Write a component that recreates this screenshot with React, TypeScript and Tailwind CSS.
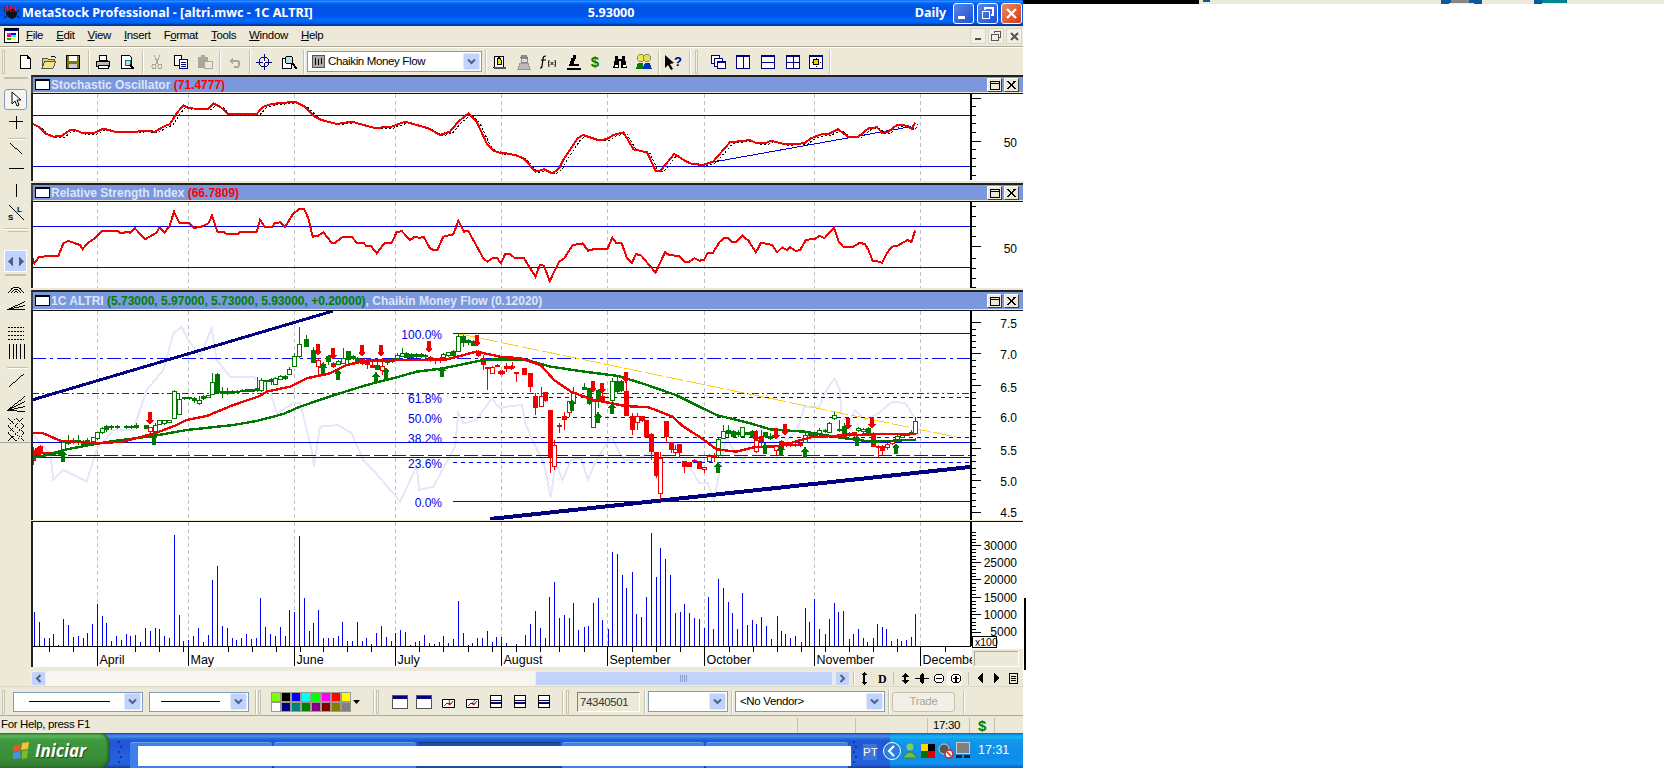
import React from "react";

type P = { children?: React.ReactNode };
const sx = (n: number) => n / 3;
const rx = (n: number) => 500 + n / 2.958;
const pts = (l: number[], r: number[], y0: number, dx = 0, dy = 0) => {
  const out: string[] = [];
  for (let i = 0; i < l.length; i += 2) out.push(`${sx(l[i]) + dx},${y0 + l[i + 1] / 3 + dy}`);
  for (let i = 0; i < r.length; i += 2) out.push(`${rx(r[i]) + dx},${y0 + r[i + 1] / 3 + dy}`);
  return out.join(" ");
};

const GRID = [97.5, 188.5, 294.5, 395.5, 501.5, 607.5, 704.5, 814.5, 920.5];

const stochL = [96,130,115,140,135,160,160,170,185,168,210,150,225,150,250,160,280,160,310,146,345,155,410,155,430,152,465,155,490,140,510,132,530,100,550,76,565,85,625,87,640,70,660,80,685,102,770,102,790,80,815,72,885,65,915,80,945,110,965,120,1010,132,1055,125,1120,143,1170,142,1215,125,1285,145,1320,165,1350,155,1375,125,1405,100,1430,125,1460,190,1480,212,1510,222];
const stochR = [0,217,45,225,70,235,105,275,130,268,155,280,175,265,190,235,230,175,245,165,290,180,315,178,335,165,365,157,395,208,435,217,460,272,475,272,515,222,560,250,600,255,630,245,680,187,740,180,760,190,785,190,800,182,845,193,900,190,920,175,950,163,970,163,1000,148,1030,170,1060,170,1090,145,1115,142,1130,158,1145,157,1175,135,1205,137,1218,147,1228,128];
const rsiL = [96,530,103,550,118,530,175,528,190,490,205,483,240,495,248,507,265,488,280,478,305,453,355,453,362,460,385,455,390,458,405,445,435,478,470,458,478,442,493,458,508,440,522,395,538,428,565,428,580,443,600,442,625,430,636,407,652,455,670,455,680,462,715,462,722,455,770,455,780,420,795,441,815,441,825,430,840,427,855,441,880,400,900,386,912,386,925,415,938,470,955,467,970,457,995,488,1005,488,1030,470,1055,470,1070,488,1090,488,1098,497,1112,497,1130,520,1155,488,1175,488,1190,457,1205,453,1230,480,1245,470,1255,473,1272,472,1290,505,1300,510,1312,510,1330,470,1360,463,1375,422,1392,455,1405,453,1450,535,1462,545,1480,533,1490,533,1503,550];
const rsiR = [15,523,30,523,45,535,70,533,105,590,118,555,130,557,147,603,175,545,190,535,215,495,245,490,260,512,280,507,318,507,332,473,345,490,360,490,375,533,390,550,402,522,418,527,460,578,488,517,500,525,530,528,545,545,560,545,575,535,590,542,603,540,615,518,630,518,650,485,665,473,675,473,685,485,700,485,717,467,735,482,757,517,772,488,805,495,820,517,835,502,848,510,858,502,875,513,888,510,905,480,932,476,945,468,960,474,988,443,1002,485,1015,500,1045,500,1065,488,1080,493,1090,510,1102,542,1115,543,1130,549,1145,518,1160,500,1175,498,1205,480,1217,486,1228,452];
const ghostL = [96,430,150,490,160,570,190,540,260,575,290,480,340,420,400,420,440,300,490,240,520,130,545,110,565,150,600,200,635,115,650,210,690,260,760,260,810,300,830,370,880,340,900,340,935,480,942,530,960,410,1015,405,1055,430,1090,510,1120,540,1200,635,1250,530,1258,600,1300,590,1365,470,1375,370,1390,400,1430,390,1475,325];
const ghostR = [0,355,20,350,65,345,75,400,100,460,130,520,150,620,165,520,185,570,210,510,240,505,260,570,285,510,330,440,345,470,365,510,400,510,440,490,480,495,520,510,560,530,590,580,615,580,632,630,645,570,670,440,700,500,720,510,750,440,780,410,810,420,850,450,880,420,900,350,945,350,965,300,990,265,1005,300,1010,370,1030,400,1050,360,1080,390,1120,370,1160,335,1200,340,1230,390];
const greenL = [96,505,150,492,200,478,270,465,340,453,460,438,560,420,700,405,770,393,850,372,900,350,1000,316,1100,285,1190,262,1250,245,1330,235,1450,210];
const greenR = [0,208,80,210,150,230,250,245,350,258,420,280,520,315,640,375,740,400,800,418,900,425,1020,445,1100,455,1230,449];
const redL = [96,428,130,430,180,452,290,460,370,455,470,428,530,405,560,390,620,378,700,345,780,318,800,305,870,290,920,265,990,250,1040,225,1100,212,1240,210,1340,208,1430,185,1500,200];
const redR = [0,200,60,205,120,225,160,270,210,305,270,328,370,348,440,352,510,380,540,408,600,447,640,478,700,485,750,472,830,468,890,450,920,442,1000,437,1100,433,1230,432];

const candlesL = "100,470,525,480,510,R;110,470,500,475,492,R;120,465,495,470,490,R;135,485,500,487,495,R;147,485,498,488,495,R;160,485,498,488,494,g;175,480,495,485,491,g;190,450,515,458,478,g;205,435,465,450,460,G;220,445,462,452,458,G;235,435,465,450,458,G;250,450,470,455,465,G;262,445,470,452,465,G;278,440,462,442,455,g;292,425,450,428,445,g;305,412,432,415,428,g;318,405,425,410,418,G;333,405,420,408,412,g;350,405,418,410,412,G;378,405,418,410,412,G;393,405,418,410,413,G;407,400,418,405,413,G;437,405,418,407,416,G;450,410,435,413,425,r;465,400,440,405,425,g;478,390,405,392,402,g;493,390,405,392,400,g;507,390,400,392,396,g;522,300,388,305,385,g;537,310,375,328,372,g;553,320,330,322,326,G;568,320,330,323,326,G;582,322,340,325,330,G;596,318,345,330,340,g;610,315,330,318,324,G;625,315,325,317,322,g;637,250,315,278,312,g;652,250,310,252,308,G;667,290,325,305,310,G;682,295,315,303,310,G;697,300,312,303,309,G;712,300,310,303,308,G;727,298,306,300,304,G;742,296,306,298,303,G;757,296,306,298,303,G;772,262,306,295,302,G;782,265,305,272,302,g;797,270,305,272,275,G;812,265,285,268,274,G;825,262,285,265,282,g;840,255,270,258,268,g;855,255,270,258,265,G;868,230,255,238,252,g;883,190,232,200,230,g;898,112,205,162,200,g;918,135,172,148,170,G;940,170,220,182,218,G;955,205,260,212,230,r;970,215,252,222,232,G;985,195,225,198,215,G;1000,215,235,220,230,R;1015,210,225,215,222,g;1028,175,222,205,220,g;1043,185,220,185,208,G;1058,195,210,198,205,G;1072,200,222,205,218,G;1087,205,225,208,220,R;1100,205,238,210,222,R;1115,215,235,225,232,R;1130,210,240,225,238,G;1145,205,255,230,240,r;1160,205,225,210,217,g;1175,205,220,208,215,G;1190,190,210,195,205,g;1205,175,200,190,198,g;1218,185,205,190,202,G;1232,190,205,192,202,G;1247,190,203,193,200,G;1262,190,203,193,198,G;1275,192,205,195,200,G;1290,198,215,202,212,R;1305,205,222,207,212,R;1320,202,220,205,212,R;1330,190,205,193,202,g;1345,185,200,188,197,g;1360,180,200,185,195,G;1375,128,187,140,185,g;1390,135,170,140,158,G;1405,148,165,152,158,G;1420,150,165,155,165,G;1435,180,200,185,195,R;1448,195,240,205,222,R;1462,230,300,232,235,R;1476,228,252,232,250,r;1490,222,232,225,228,R;1505,240,255,245,250,R;1518,225,245,230,236,r;1533,225,240,230,235,r";
const candlesR = "0,240,255,245,250,R;18,220,245,228,233,r;35,215,235,228,232,r;48,245,275,247,249,R;70,233,255,235,252,R;90,250,305,250,290,R;105,310,375,320,352,R;120,290,350,320,350,r;133,305,335,308,330,R;147,360,550,360,500,R;160,450,540,465,530,r;175,400,430,405,410,R;190,365,420,380,388,R;203,335,380,335,368,r;217,290,345,310,340,g;247,280,300,292,297,G;262,295,345,295,340,G;275,335,415,335,412,r;289,300,355,300,335,G;303,300,330,320,330,R;332,265,335,275,330,g;345,255,310,275,305,G;358,270,305,275,300,G;372,250,375,305,375,R;390,370,435,378,418,R;405,370,420,378,398,r;420,378,395,378,392,R;433,392,440,392,438,R;447,430,510,432,485,R;460,487,565,487,555,R;473,487,630,505,610,r;490,393,460,393,440,R;505,458,490,458,478,R;518,465,495,478,488,r;530,462,505,462,488,R;545,512,550,515,530,R;560,515,530,518,528,R;575,508,515,510,512,R;590,515,535,515,535,R;603,530,550,532,538,r;617,492,517,498,515,r;632,490,515,497,500,R;646,445,500,447,497,g;660,405,445,425,445,g;675,405,440,420,430,G;688,420,445,423,440,G;703,420,440,428,432,G;717,410,440,412,440,g;731,425,435,428,432,G;745,420,445,423,440,G;757,420,490,450,485,r;772,420,470,440,455,R;785,425,445,428,438,G;800,430,450,440,445,G;815,465,495,470,480,r;830,450,490,455,475,R;845,455,470,458,465,R;858,460,470,462,465,R;872,458,470,462,465,R;888,455,470,460,465,R;902,430,460,437,457,g;917,425,440,428,435,G;931,425,440,428,435,G;945,415,440,420,430,g;960,418,430,420,425,G;973,395,430,400,428,g;988,365,390,375,385,g;1002,390,425,418,422,G;1017,400,430,410,430,G;1032,425,440,430,435,R;1047,425,440,428,435,R;1060,410,425,415,422,g;1075,415,430,418,425,g;1088,410,430,415,430,G;1102,425,470,430,470,R;1117,465,500,468,472,R;1131,465,495,468,480,R;1145,460,480,462,472,r;1160,450,465,452,460,r;1175,435,450,438,450,g;1189,430,445,435,442,g;1203,428,438,430,436,G;1217,420,435,428,433,G;1229,382,432,395,430,g";

const volL = [103,280,118,310,133,357,148,357,160,345,175,378,190,300,205,318,220,354,235,351,248,357,262,342,277,315,292,255,307,291,319,312,334,366,349,351,364,363,379,345,391,351,406,348,421,369,436,327,451,336,466,327,478,330,493,351,508,357,523,48,538,288,550,366,565,363,580,351,595,327,610,369,625,348,637,183,652,141,667,321,682,327,697,357,709,363,724,357,739,345,754,360,769,357,781,237,796,324,811,345,826,351,841,324,856,351,868,273,883,279,898,51,913,237,928,336,940,312,955,273,970,357,985,357,1000,357,1015,351,1027,309,1042,366,1057,366,1072,309,1087,366,1099,357,1114,375,1129,342,1144,321,1159,354,1174,366,1186,342,1201,333,1216,339,1231,378,1246,369,1258,366,1273,348,1288,372,1303,375,1318,369,1330,351,1345,372,1360,360,1375,246,1390,342,1405,378,1417,372,1432,357,1447,357,1462,336,1477,369,1489,354];
const volR = [4,354,19,372,48,376,75,348,90,315,105,276,119,327,134,357,146,234,161,189,176,297,190,288,205,297,217,252,232,333,247,324,261,321,276,252,291,237,303,303,318,330,332,99,347,105,362,168,374,207,389,159,403,285,418,294,433,234,448,42,460,174,474,87,489,120,504,168,519,282,531,279,545,255,560,282,575,297,590,300,604,327,616,234,631,330,646,180,661,207,675,249,687,282,702,330,717,222,732,318,746,303,758,315,773,294,788,321,803,360,818,291,832,336,844,345,858,357,874,351,889,369,903,267,915,309,930,240,945,330,960,345,974,300,989,252,1001,279,1016,276,1031,360,1045,345,1060,330,1073,357,1087,369,1102,357,1116,315,1131,324,1143,330,1158,366,1173,360,1187,366,1202,363,1217,354,1229,285];

const Grid = ({ y1, y2 }: { y1: number; y2: number }) => (
  <g>
    {GRID.map((x) => (
      <line key={x} x1={x} x2={x} y1={y1} y2={y2} stroke="#c0c0c0" strokeDasharray="4 3" />
    ))}
  </g>
);

const Ticks = ({ major, minor, y1, y2 }: { major: number[]; minor: number[]; y1: number; y2: number }) => (
  <g stroke="#000">
    <line x1={971} x2={971} y1={y1} y2={y2} strokeWidth={2} />
    {major.map((y) => <line key={y} x1={971} x2={981} y1={y} y2={y} />)}
    {minor.map((y) => <line key={y} x1={971} x2={976} y1={y} y2={y} />)}
  </g>
);

const AxisText = ({ y, t }: { y: number; t: string }) => (
  <text x={1017} y={y + 5} textAnchor="end" fontSize={12} fill="#000" fontFamily="Liberation Sans, sans-serif" style={{ shapeRendering: "auto" }}>{t}</text>
);

const between = (major: number[], n: number) => {
  const o: number[] = [];
  for (let i = 0; i + 1 < major.length; i++) {
    for (let j = 1; j < n; j++) o.push(Math.round(major[i] + ((major[i + 1] - major[i]) * j) / n) + 0.5);
  }
  return o;
};

const StochChart = () => (
  <svg viewBox="33 94 990 87" width={990} height={87} className="block" shapeRendering="crispEdges">
    <Grid y1={94} y2={181} />
    <line x1={32} x2={971} y1={115.5} y2={115.5} stroke="#0000e6" />
    <line x1={32} x2={971} y1={166.5} y2={166.5} stroke="#0000e6" />
    <polyline points={pts(stochL, stochR, 80, 3, 1)} fill="none" stroke="#000" strokeDasharray="2 2" />
    <line x1={rx(610)} y1={80 + 250 / 3} x2={rx(1215)} y2={80 + 140 / 3} stroke="#0000e6" />
    <polyline points={pts(stochL, stochR, 80)} fill="none" stroke="#f00000" strokeWidth={2} />
    <Ticks y1={94} y2={180} major={[98.5, 141.5]} minor={[106.5, 115.5, 123.5, 132.5, 149.5, 158.5, 166.5, 175.5]} />
    <AxisText y={142} t="50" />
  </svg>
);

const RsiChart = () => (
  <svg viewBox="33 202 990 86" width={990} height={86} className="block" shapeRendering="crispEdges">
    <Grid y1={202} y2={288} />
    <line x1={32} x2={971} y1={226.5} y2={226.5} stroke="#0000e6" />
    <line x1={32} x2={971} y1={267.5} y2={267.5} stroke="#0000e6" />
    <polyline points={pts(rsiL, rsiR, 80)} fill="none" stroke="#f00000" strokeWidth={2} />
    <Ticks y1={202} y2={288} major={[246.5]} minor={[206.5, 216.5, 226.5, 236.5, 258.5, 268.5, 278.5, 287.5]} />
    <AxisText y={248} t="50" />
  </svg>
);

const parse = (s: string, fx: (n: number) => number) =>
  s.split(";").map((row) => {
    const a = row.split(",");
    return { x: Math.round(fx(+a[0])), hi: 290 + +a[1] / 3, lo: 290 + +a[2] / 3, top: 290 + +a[3] / 3, bot: 290 + +a[4] / 3, k: a[5] };
  });
const candles = [...parse(candlesL, sx), ...parse(candlesR, rx)];

const Candle = ({ c }: { c: (typeof candles)[number] }) => {
  const col = c.k === "R" || c.k === "r" ? "#f00000" : "#007800";
  const filled = c.k === "R" || c.k === "G";
  return (
    <g>
      <line x1={c.x + 0.5} x2={c.x + 0.5} y1={c.hi} y2={c.lo} stroke={col} />
      <rect x={c.x - 1.5} y={c.top} width={4} height={Math.max(c.bot - c.top, 1)} fill={filled ? col : "#fff"} stroke={col} strokeWidth={1} />
    </g>
  );
};

const ArrowDown = ({ x, a, b }: { x: number; a: number; b: number }) => (
  <polygon fill="#f00000" points={`${x - 2},${a} ${x + 2},${a} ${x + 2},${b - 5} ${x + 4},${b - 5} ${x},${b} ${x - 4},${b - 5} ${x - 2},${b - 5}`} />
);
const ArrowUp = ({ x, a, b }: { x: number; a: number; b: number }) => (
  <polygon fill="#007800" points={`${x - 2},${b} ${x + 2},${b} ${x + 2},${a + 5} ${x + 4},${a + 5} ${x},${a} ${x - 4},${a + 5} ${x - 2},${a + 5}`} />
);

const downL = [[450,365,405],[953,162,197],[998,175,210],[1086,165,200],[1143,165,200],[1287,153,188],[1431,135,170]];
const downR = [[275,272,308],[302,278,312],[372,245,280],[757,422,455],[815,415,450],[842,402,437],[1030,385,420],[1100,382,417]];
const upL = [[188,480,515],[463,430,465],[968,218,252],[1013,238,270],[1127,245,280],[1158,232,267],[1327,228,262]];
const upR = [[213,328,362],[290,365,400],[330,338,372],[645,515,550],[785,458,492],[830,465,497],[902,470,503],[1057,435,468],[1172,460,493]];

const Fib = ({ y, t, line = "4 4" }: { y: number; t: string; line?: string }) => (
  <g>
    <line x1={453} x2={971} y1={y} y2={y} stroke="#0000e6" strokeDasharray={line} />
    <text x={442} y={y + 5} textAnchor="end" fontSize={12} fill="#0000e6" fontFamily="Liberation Sans, sans-serif">{t}</text>
  </g>
);

const mainMajor = [322.5, 353.5, 385.5, 417.5, 448.5, 480.5, 512.5];

const MainChart = () => (
  <svg viewBox="33 311 990 209" width={990} height={209} className="block" shapeRendering="crispEdges">
    <Grid y1={311} y2={520} />
    <polyline points={pts(ghostL, ghostR, 290)} fill="none" stroke="#e4e8f8" strokeWidth={2} />
    <line x1={32} x2={971} y1={358.5} y2={358.5} stroke="#0a0aff" strokeDasharray="14 4 3 4" />
    <line x1={32} x2={971} y1={393.5} y2={393.5} stroke="#0a4a2a" strokeDasharray="7 3 2 3" />
    <line x1={32} x2={971} y1={442.5} y2={442.5} stroke="#0000e6" />
    <line x1={32} x2={971} y1={455.5} y2={455.5} stroke="#0a3a2a" strokeDasharray="14 4" />
    <line x1={32} x2={971} y1={457.5} y2={457.5} stroke="#0000e6" />
    <line x1={32} y1={400} x2={333} y2={311} stroke="#000080" strokeWidth={3} />
    <line x1={490} y1={519} x2={970} y2={467} stroke="#000080" strokeWidth={4} />
    <line x1={460} y1={334} x2={956} y2={437} stroke="#ffd21a" strokeDasharray="18 3" />
    <Fib y={333.5} t="100.0%" line="0" />
    <Fib y={397.5} t="61.8%" />
    <Fib y={417.5} t="50.0%" />
    <Fib y={437.5} t="38.2%" />
    <Fib y={462.5} t="23.6%" />
    <Fib y={501.5} t="0.0%" line="0" />
    {candles.map((c, i) => <Candle key={i} c={c} />)}
    <polyline points={pts(greenL, greenR, 290)} fill="none" stroke="#007800" strokeWidth={2.4} />
    <polyline points={pts(redL, redR, 290)} fill="none" stroke="#f00000" strokeWidth={2.4} />
    {downL.map((d) => <ArrowDown key={d[0]} x={Math.round(sx(d[0]))} a={290 + d[1] / 3} b={290 + d[2] / 3} />)}
    {downR.map((d) => <ArrowDown key={d[0]} x={Math.round(rx(d[0]))} a={290 + d[1] / 3} b={290 + d[2] / 3} />)}
    {upL.map((d) => <ArrowUp key={d[0]} x={Math.round(sx(d[0]))} a={290 + d[1] / 3} b={290 + d[2] / 3} />)}
    {upR.map((d) => <ArrowUp key={d[0]} x={Math.round(rx(d[0]))} a={290 + d[1] / 3} b={290 + d[2] / 3} />)}
    <Ticks y1={311} y2={520} major={mainMajor} minor={between(mainMajor, 5)} />
    {["7.5", "7.0", "6.5", "6.0", "5.5", "5.0", "4.5"].map((t, i) => <AxisText key={t} y={[323, 354, 387, 417, 450, 481, 512][i]} t={t} />)}
  </svg>
);

const minorX = [148,220,406,478,550,683,755,827,899,970,1042,1114,1258,1330,1405,1477,1549].map(sx).concat([48,119,176,247,389,460,531,676,747,818,889,960,1031,1102,1173,1316].map(rx));
const months: [string, number][] = [["April", 97.5],["May", 188.5],["June", 294.5],["July", 395.5],["August", 501.5],["September", 607.5],["October", 704.5],["November", 814.5],["December", 920.5]];
const volMajor = [546.5, 563.5, 580.5, 598.5, 615.5, 633.5];

const VolumeChart = () => (
  <svg viewBox="33 523 990 145" width={990} height={145} className="block" shapeRendering="crispEdges">
    <rect x={33} y={523} width={990} height={145} fill="#fff" />
    <Grid y1={523} y2={647} />
    {volL.map((_, i) => i % 2 === 0 ? <rect key={"a" + i} x={Math.round(sx(volL[i]))} y={520 + volL[i + 1] / 3} width={1} height={647 - 520 - volL[i + 1] / 3} fill="#0000f0" /> : null)}
    {volR.map((_, i) => i % 2 === 0 ? <rect key={"b" + i} x={Math.round(rx(volR[i]))} y={520 + volR[i + 1] / 3} width={1} height={647 - 520 - volR[i + 1] / 3} fill="#0000f0" /> : null)}
    <line x1={33} x2={971} y1={647.5} y2={647.5} stroke="#000" />
    {minorX.map((x, i) => <line key={i} x1={Math.round(x) + 0.5} x2={Math.round(x) + 0.5} y1={647} y2={653} stroke="#000" />)}
    {months.map(([t, x]) => (
      <g key={t}>
        <line x1={x} x2={x} y1={647} y2={667} stroke="#000" />
        <text x={x + 2} y={665} fontSize={12.5} fill="#000" fontFamily="Liberation Sans, sans-serif">{t}</text>
      </g>
    ))}
    <rect x={972} y={523} width={51} height={145} fill="#fff" />
    <Ticks y1={523} y2={647} major={volMajor} minor={between([529.5, ...volMajor], 5)} />
    {["30000", "25000", "20000", "15000", "10000"].map((t, i) => <AxisText key={t} y={[546, 563, 580, 598, 615][i]} t={t} />)}
    <AxisText y={632} t="5000" />
    <rect x={972.5} y={637.5} width={24} height={11} fill="#fff" stroke="#000" />
    <text x={975} y={647} fontSize={10.5} fill="#000" fontFamily="Liberation Sans, sans-serif">x100</text>
    <rect x={972} y={650} width={51} height={18} fill="#ece9d8" />
    <rect x={974.5} y={652.5} width={44} height={15} fill="#ece9d8" stroke="#aca899" />
    <line x1={974} x2={1019} y1={667.5} y2={667.5} stroke="#fff" />
    <line x1={1018.5} x2={1018.5} y1={652} y2={668} stroke="#fff" />
  </svg>
);

const WinBtn = ({ kind }: { kind: "max" | "x" }) => (
  <span className="w-[15px] h-[14px] bg-[#ece9d8] border border-t-white border-l-white border-r-[#404040] border-b-[#404040] flex items-center justify-center">
    <svg width="11" height="10" viewBox="0 0 11 10" shapeRendering="crispEdges">
      {kind === "max" ? (
        <path d="M1 1h9v8H1zM1 1h9v2H1z" fill="none" stroke="#000" />
      ) : (
        <path d="M2 1l7 8M9 1L2 9" stroke="#000" strokeWidth="1.6" />
      )}
    </svg>
  </span>
);

const PanelHead = ({ children, tall }: P & { tall?: boolean }) => (
  <div className={(tall ? "h-[20px]" : "h-[18px]") + " border-t-2 border-t-[#222] border-l-2 border-l-[#444] bg-[#ece9d8] flex shrink-0"}>
    <div className="flex-1 mb-[1px] bg-[#7b98de] flex items-center pl-[2px] pr-[4px] font-['Liberation_Sans',sans-serif] text-[12px] font-bold leading-none text-[#dde5f9] whitespace-nowrap">
      <span className="w-[15px] h-[11px] mr-[1px] bg-white border border-black border-t-2 shrink-0" />
      <span>{children}</span>
      <span className="ml-auto flex gap-[2px]">
        <WinBtn kind="max" />
        <WinBtn kind="x" />
      </span>
    </div>
  </div>
);

const Body = ({ children }: P) => (
  <div className="border-l-2 border-l-[#222] border-t border-t-[#111] bg-white shrink-0">{children}</div>
);

/* ---- small icons ---- */
const I = ({ children, w = 16, h = 16 }: P & { w?: number; h?: number }) => (
  <svg width={w} height={h} viewBox={`0 0 ${w} ${h}`} shapeRendering="crispEdges" className="block">{children}</svg>
);
const NewIc = () => <I><path d="M3 1.500h7l3 3v10H3z" fill="#fff" stroke="#000" /><path d="M10 1.500v3h3" fill="none" stroke="#000" /></I>;
const OpenIc = () => <I><path d="M1 4h5l1 1h6v2H4L1 14z" fill="#e8d060" stroke="#555" /><path d="M1 14l3-7h11l-3 7z" fill="#f2e48a" stroke="#555" /><path d="M10 3q3-2 5 1" fill="none" stroke="#000" /></I>;
const SaveIc = () => <I><path d="M1.500 1.500h13v13h-13z" fill="#7a7a10" stroke="#000" /><path d="M4 2h8v5H4z" fill="#fff" /><path d="M4 10h8v4H4z" fill="#ccc" /></I>;
const PrintIc = () => <I><path d="M4 1.500h7l1 5H4z" fill="#fff" stroke="#000" /><path d="M1.500 7.500h13v5h-13z" fill="#bbb" stroke="#000" /><path d="M3 11.500h10v3H3z" fill="#fff" stroke="#000" /></I>;
const PreviewIc = () => <I><path d="M2.500 1.500h8l2 2v11h-10z" fill="#fff" stroke="#000" /><circle cx="9" cy="9" r="3" fill="#b8e0e8" stroke="#008080" /><path d="M11 11l4 4" stroke="#000" strokeWidth="2" /></I>;
const CutIc = () => <I><path d="M5 1l4 9M11 1L7 10" stroke="#a8a89a" /><circle cx="5" cy="12.500" r="2" fill="none" stroke="#a8a89a" /><circle cx="11" cy="12.500" r="2" fill="none" stroke="#a8a89a" /></I>;
const CopyIc = () => <I><path d="M1.500 1.500h7v10h-7z" fill="#fff" stroke="#000" /><path d="M6.500 5.500h8v9h-8z" fill="#fff" stroke="#000080" /><path d="M8 8h5M8 10h5M8 12h5" stroke="#000080" /></I>;
const PasteIc = () => <I><path d="M1 3h10v11H1z" fill="#a8a89a" /><path d="M4 1h4v3H4z" fill="#a8a89a" /><path d="M7.500 7.500h8v7h-8z" fill="#ece9d8" stroke="#a8a89a" /></I>;
const UndoIc = () => <I><path d="M3 7h8q3 2 0 6H7" fill="none" stroke="#a8a89a" strokeWidth="2" /><path d="M2 7l4-3v6z" fill="#a8a89a" /></I>;
const TargetIc = () => <I><circle cx="8" cy="8" r="5" fill="none" stroke="#000080" /><path d="M8 0v16M0 8h16" stroke="#000080" /><path d="M7 7h2v2H7z" fill="#fff" /></I>;
const ZoomIc = () => <I><path d="M1.500 4.500h9v10h-9z" fill="#fff" stroke="#000" /><circle cx="8" cy="6" r="4" fill="#b8e0e8" stroke="#000" /><path d="M11 9l5 6" stroke="#000" strokeWidth="2" /></I>;
const AlarmIc = () => <I><path d="M4 2h8l1 11H3z" fill="#fff" stroke="#000" /><path d="M6 6l2-3 2 3v4H6z" fill="#e0e020" stroke="#000" /><path d="M3 13h12v2H3z" fill="#555" /></I>;
const ManIc = () => <I><path d="M4 3h8v1H4z" fill="#555" /><path d="M5 1h6v3H5z" fill="#888" /><path d="M5 4h6v4H5z" fill="#ddd" stroke="#888" /><path d="M2 15l2-6h8l2 6z" fill="#bbb" stroke="#999" /></I>;
const FxIc = () => <svg width="18" height="16" viewBox="0 0 18 16" className="block"><path d="M7 2q-3 0-3 3l-1 7q0 2-2 2M2 6h5" fill="none" stroke="#000" strokeWidth="1.2" /><path d="M10 6q-1 3 0 7M16 6q1 3 0 7M11.500 8l3 3M14.500 8l-3 3" fill="none" stroke="#000" /></svg>;
const MicroIc = () => <I><path d="M7 1h3v3H7zM5 4h5l-3 7H4zM3 10h10v2H3zM1 14h14v1.500H1z" fill="#000" /></I>;
const BinoIc = () => <I><path d="M3 2h3v3h4V2h3v3l2 9H9V7H7v7H1l2-9z" fill="#000" /><path d="M3 11h3v2H3zM11 11h3v2h-3z" fill="#fff" /></I>;
const PeopleIc = () => <I><circle cx="5" cy="4" r="3.500" fill="#f2e640" stroke="#888" /><circle cx="11" cy="4" r="3.500" fill="#e8e040" stroke="#888" /><path d="M0 15l2-6h5l1 6z" fill="#008000" /><path d="M7 15l2-6h5l2 6z" fill="#0030c0" /></I>;
const HelpIc = () => <svg width="20" height="18" viewBox="0 0 20 18" className="block"><path d="M1 2l9 8-4 1 3 5-2 1-3-5-3 3z" fill="#000" /><text x="10" y="13" fontSize="13" fontWeight="700" fill="#000080" fontFamily="Liberation Sans, sans-serif">?</text></svg>;
const Tile = ({ d }: { d: string }) => <I><path d="M1.500 1.500h13v13h-13z" fill="#fff" stroke="#000080" /><path d="M1 1h14v2H1z" fill="#000080" /><path d={d} stroke="#000080" fill="none" /></I>;
const CascadeIc = () => <I><path d="M1.500 1.500h8v8h-8z" fill="#fff" stroke="#000080" /><path d="M4.500 4.500h8v8h-8z" fill="#fff" stroke="#000080" /><path d="M7.500 7.500h8v7h-8z" fill="#fff" stroke="#000080" /><path d="M7 7h9v2H7z" fill="#000080" /></I>;
const GearIc = () => <I><path d="M1.500 1.500h13v13h-13z" fill="#fff" stroke="#000080" /><path d="M1 1h14v2H1z" fill="#000080" /><path d="M8 3.500v1M8 12v1M3.500 8h1M12 8h1M5 5l1 1M11 11l-1-1M11 5l-1 1M5 11l1-1" stroke="#000" /><circle cx="8" cy="8" r="3" fill="#f0d000" stroke="#000" /></I>;
const Dollar = () => <span className="font-['Liberation_Sans',sans-serif] font-bold text-[15px] text-[#008000] leading-none">$</span>;

const Sep = ({ className = "" }: { className?: string }) => (
  <span className={"w-[2px] h-[24px] border-l border-l-[#c4c1b0] border-r border-r-white shrink-0 " + className} />
);
const Grip = ({ className = "" }: { className?: string }) => (
  <span className={"w-[3px] h-[24px] bg-[#f4f2e8] border border-[#c4c1b0] shrink-0 " + className} />
);
const Cell = ({ children, className = "" }: P & { className?: string }) => (
  <span className={"w-6 h-[22px] flex items-center justify-center shrink-0 " + className}>{children}</span>
);
const Chev = () => (
  <span className="w-[17px] h-[17px] bg-[#c1d3fb] border border-[#dfe8fd] rounded-[2px] flex items-center justify-center shrink-0">
    <svg width="9" height="7" viewBox="0 0 9 7"><path d="M1 1.500l3.500 3.500L8 1.500" fill="none" stroke="#4d6185" strokeWidth="2" /></svg>
  </span>
);

const MI = ({ u, r }: { u: string; r: string }) => (
  <span><span className="underline">{u}</span>{r}</span>
);

const Lines = () => (
  <svg width="12" height="13" viewBox="0 0 12 13" shapeRendering="crispEdges"><path d="M.5 .5h11v12H.5zM.5 5.500h11" fill="#fff" stroke="#000" /><path d="M1 7h10v2H1z" fill="#000080" /></svg>
);

const Palette = () => {
  const a = ["#80ff00", "#000000", "#0000ff", "#00ffff", "#00ff00", "#ff00ff", "#ff0000", "#ffff00"];
  const b = ["#ffffff", "#000080", "#008080", "#008000", "#800080", "#800000", "#808000", "#808080"];
  return (
    <div className="grid grid-cols-8 gap-[2px] w-[78px]">
      {[...a, ...b].map((c, i) => (
        <span key={i} className="w-[8px] h-[8px] outline outline-1 outline-[#9c9a8a] box-border ml-[1px]" style={{ background: c }} />
      ))}
    </div>
  );
};

const titleGrad = "bg-[linear-gradient(180deg,#0058ee_0%,#3593ff_4%,#288eff_6%,#127dff_8%,#036ffc_10%,#0262ee_14%,#0057e5_20%,#0054e3_24%,#0055eb_56%,#005bf5_66%,#026afe_76%,#0062ef_86%,#0052d6_92%,#0040ab_94%,#003092_100%)]";
const ui = "text-[11.5px] tracking-[-0.35px]";

export default function App() {
  return (
    <div className="w-[1664px] h-[768px] bg-white overflow-hidden flex font-['Liberation_Sans',sans-serif] text-black">
      {/* Application window */}
      <div className="w-[1023px] h-[768px] flex flex-col shrink-0 bg-[#ece9d8]">
        {/* title bar */}
        <div className={"h-[26px] shrink-0 flex items-center text-white font-['Noto_Sans',sans-serif] font-bold text-[12.6px] " + titleGrad}>
          <svg width="18" height="18" viewBox="0 0 18 18" className="ml-[3px] mr-[1px] shrink-0">
            <path d="M3 8q6-6 11 0q1 5-5 7q-6-2-6-7" fill="#111" />
            <path d="M1 6l3 3M1 14l3-2M16 6l-3 3M17 14l-3-2" stroke="#111" />
            <text x="1" y="8" fontSize="8" fontWeight="700" fill="#e00000" fontFamily="Liberation Serif, serif">MS</text>
          </svg>
          <span className="whitespace-nowrap">MetaStock Professional - [altri.mwc - 1C ALTRI]</span>
          <span className="ml-[275px] w-[60px]">5.93000</span>
          <span className="ml-[268px] w-[39px]">Daily</span>
          <span className="flex gap-[3px] pr-[1px]">
            <span className="w-[21px] h-[21px] rounded-[3px] border border-white bg-[linear-gradient(135deg,#5a86ea,#1f50d0)] flex items-end justify-center pb-[4px]"><span className="block w-[7px] h-[3px] bg-white mr-[5px]" /></span>
            <span className="w-[21px] h-[21px] rounded-[3px] border border-white bg-[linear-gradient(135deg,#5a86ea,#1f50d0)] flex items-center justify-center">
              <svg width="13" height="13" viewBox="0 0 13 13" shapeRendering="crispEdges"><path d="M4 3V1h8v7h-2" fill="none" stroke="#fff" strokeWidth="1.500" /><path d="M1.500 4.500h7v7h-7z" fill="none" stroke="#fff" strokeWidth="1.500" /></svg>
            </span>
            <span className="w-[21px] h-[21px] rounded-[3px] border border-white bg-[linear-gradient(135deg,#eb8a68,#cf3a12)] flex items-center justify-center">
              <svg width="13" height="13" viewBox="0 0 13 13"><path d="M2 2l9 9M11 2l-9 9" stroke="#fff" strokeWidth="2.400" /></svg>
            </span>
          </span>
        </div>

        {/* menu bar */}
        <div className={"h-[21px] shrink-0 flex items-center leading-none border-b border-b-[#aca899] " + ui}>
          <svg width="16" height="16" viewBox="0 0 16 16" className="ml-[4px] shrink-0" shapeRendering="crispEdges">
            <path d="M.5 .5h14v14H.5z" fill="#fff" stroke="#000" />
            <path d="M1 1h13v2H1z" fill="#000080" />
            <path d="M3 5h4v2H3z" fill="#ff00ff" /><path d="M7 5h5v2H7z" fill="#0000ff" />
            <path d="M3 7h4v2H3z" fill="#ff0000" /><path d="M7 7h5v2H7z" fill="#00ffff" />
            <path d="M3 10h4v2H3z" fill="#00c000" /><path d="M7 10h5v2H7z" fill="#ffff00" />
          </svg>
          <span className="ml-[6px] flex gap-[13px]">
            <MI u="F" r="ile" /><MI u="E" r="dit" /><MI u="V" r="iew" /><MI u="I" r="nsert" />
            <span>F<span className="underline">o</span>rmat</span><MI u="T" r="ools" /><MI u="W" r="indow" /><MI u="H" r="elp" />
          </span>
          <span className="ml-auto flex gap-[2px] pr-[1px]">
            <span className="w-[16px] h-[16px] border border-[#d8d5c6] bg-[#f2f0e6] flex items-end justify-center pb-[3px]"><span className="block w-[6px] h-[2px] bg-[#555]" /></span>
            <span className="w-[16px] h-[16px] border border-[#d8d5c6] bg-[#f2f0e6] flex items-center justify-center">
              <svg width="10" height="10" viewBox="0 0 10 10" shapeRendering="crispEdges"><path d="M3 2V.5h6.500v6H8M.5 3.500h6.500v6H.5z" fill="none" stroke="#555" /></svg>
            </span>
            <span className="w-[16px] h-[16px] border border-[#d8d5c6] bg-[#f2f0e6] flex items-center justify-center">
              <svg width="9" height="9" viewBox="0 0 9 9"><path d="M1 1l7 7M8 1L1 8" stroke="#555" strokeWidth="2" /></svg>
            </span>
          </span>
        </div>

        {/* main toolbar */}
        <div className="h-[28px] shrink-0 flex items-center border-t border-t-white">
          <Grip className="ml-[2px]" />
          <Cell className="ml-[8px]"><NewIc /></Cell><Cell><OpenIc /></Cell><Cell><SaveIc /></Cell>
          <Sep className="ml-[3px]" />
          <Cell className="ml-[1px]"><PrintIc /></Cell><Cell><PreviewIc /></Cell>
          <Sep className="ml-[3px]" />
          <Cell className="ml-[1px]"><CutIc /></Cell><Cell><CopyIc /></Cell><Cell><PasteIc /></Cell>
          <Sep className="ml-[2px]" />
          <Cell className="ml-[2px]"><UndoIc /></Cell>
          <Sep className="ml-[2px]" />
          <Cell className="ml-[1px]"><TargetIc /></Cell><Cell className="ml-[1px]"><ZoomIc /></Cell>
          <Sep className="ml-[2px]" />
          <div className={"ml-[2px] w-[175px] h-[21px] bg-white border border-[#7f9db9] flex items-center pl-[4px] pr-[1px] shrink-0 " + ui}>
            <svg width="13" height="13" viewBox="0 0 13 13" shapeRendering="crispEdges" className="shrink-0 mr-[3px]"><path d="M.5 .5h12v12H.5z" fill="#aaa" stroke="#555" /><path d="M3 3v7M6 4v6M9 3v6" stroke="#000" /></svg>
            <span className="whitespace-nowrap">Chaikin Money Flow</span>
            <span className="ml-auto"><Chev /></span>
          </div>
          <Sep className="ml-[3px]" />
          <Cell><AlarmIc /></Cell><Cell className="ml-[1px]"><ManIc /></Cell><Cell><FxIc /></Cell>
          <Cell className="ml-[2px]"><MicroIc /></Cell><Cell className="-ml-[3px]"><Dollar /></Cell><Cell className="ml-[1px]"><BinoIc /></Cell><Cell><PeopleIc /></Cell>
          <Sep className="ml-[2px]" />
          <Cell className="ml-[2px]"><HelpIc /></Cell>
          <Sep className="ml-[3px]" />
          <Grip className="ml-[4px]" />
          <Cell className="ml-[8px]"><CascadeIc /></Cell>
          <Cell className="ml-[1px]"><Tile d="M8 3v11" /></Cell>
          <Cell className="ml-[1px]"><Tile d="M2 8h12" /></Cell>
          <Cell className="ml-[1px]"><Tile d="M8 3v11M2 8h12" /></Cell>
          <Cell className="-ml-[1px]"><GearIc /></Cell>
          <Sep className="ml-[1px]" />
        </div>

        {/* work area */}
        <div className="flex h-[595px] shrink-0">
          <div className="w-[31px] shrink-0 flex flex-col items-center border-b border-b-[#aca899] h-[368px]">
            <span className="mt-[2px] w-[24px] h-[2px] border-y border-y-[#c4c1b0] bg-white" />
            <span className="mt-[10px] w-[23px] h-[21px] rounded-[3px] border border-[#7f9db9] bg-[#f6f5ee] flex items-center justify-center">
              <svg width="12" height="16" viewBox="0 0 12 16"><path d="M2 1v12l3-3 2 5 2-1-2-5h4z" fill="#fff" stroke="#000" /></svg>
            </span>
            <svg width="24" height="142" viewBox="0 0 24 142" className="mt-[1px]" shapeRendering="crispEdges">
              <path d="M12 5v13M5 11h14" stroke="#000" />
              <path d="M4 28h18" stroke="#c4c1b0" /><path d="M4 29h18" stroke="#fff" />
              <path d="M6 33l12 10" stroke="#000" />
              <path d="M5 58h15" stroke="#000" />
              <path d="M12 74v13" stroke="#000" />
              <path d="M5 95l15 15" stroke="#000" />
              <text x="4" y="110" fontSize="8" fontWeight="700" fontFamily="Liberation Sans, sans-serif">S</text>
              <text x="13" y="102" fontSize="8" fontWeight="700" fontFamily="Liberation Sans, sans-serif">L</text>
              <path d="M0 119h24" stroke="#c4c1b0" /><path d="M0 120h24" stroke="#fff" />
              <path d="M4 122h20" stroke="#c4c1b0" />
            </svg>
            <span className="mt-[-1px] w-[23px] h-[22px] border border-white bg-[#c1d3fb] flex items-center justify-center gap-[3px]">
              <svg width="16" height="9" viewBox="0 0 16 9" shapeRendering="crispEdges"><path d="M5 0v9L0 4.500zM11 0v9l5-4.500z" fill="#4d6185" /></svg>
            </span>
            <span className="mt-[2px] w-[21px] h-[2px] border-y border-y-[#c4c1b0] bg-white" />
            <svg width="24" height="164" viewBox="0 0 24 164" className="mt-[4px]" shapeRendering="crispEdges">
              <path d="M4 13q8-12 16 0M7 13q5-7 10 0M10 13q2-3 4 0" fill="none" stroke="#000" />
              <path d="M3 30l18-8M3 30l18-4M3 30l18 0" stroke="#000" />
              <path d="M4 48h16M4 52h16M4 56h16M4 60h16" stroke="#000" strokeDasharray="2 1" />
              <path d="M5 65v15M9 65v15M13 65v15M17 65v15M21 65v15" stroke="#000" />
              <path d="M3 89h21" stroke="#c4c1b0" /><path d="M3 90h21" stroke="#fff" />
              <path d="M5 108l15-13" stroke="#000" />
              <path d="M3 132l18-14M3 132l18-9M3 132l18-4M3 132l18 1" stroke="#000" />
              <path d="M4 140l16 15M4 148l16 15M4 155l8 8M12 140l8 8M4 155l15-15M4 163l16-15M12 163l8-8M4 148l8-8" stroke="#000" strokeDasharray="2 1" />
            </svg>
          </div>
          <div className="w-[992px] shrink-0 flex flex-col">
            <PanelHead>Stochastic Oscillator <span className="text-[#ff0000]">(71.4777)</span></PanelHead>
            <Body><StochChart /></Body>
            <div className="h-[2px] shrink-0" />
            <PanelHead>Relative Strength Index <span className="text-[#ff0000]">(66.7809)</span></PanelHead>
            <Body><RsiChart /></Body>
            <div className="h-[2px] shrink-0" />
            <PanelHead tall>1C ALTRI <span className="text-[#008000]">(5.73000, 5.97000, 5.73000, 5.93000, +0.20000)</span>, Chaikin Money Flow (0.12020)</PanelHead>
            <Body><MainChart /></Body>
            <div className="h-[1px] shrink-0" />
            <Body><VolumeChart /></Body>
          </div>
        </div>

        {/* scroll row */}
        <div className="h-[16px] shrink-0 flex items-center">
          <span className="w-[31px] shrink-0" />
          <span className="w-[15px] h-[15px] bg-[#c1d3fb] border border-[#e6edfd] rounded-[2px] flex items-center justify-center shrink-0">
            <svg width="7" height="9" viewBox="0 0 7 9"><path d="M5.500 1L2 4.500 5.500 8" fill="none" stroke="#4d6185" strokeWidth="2" /></svg>
          </span>
          <span className="w-[489px] h-[15px] bg-[#f7f6f0] shrink-0" />
          <span className="w-[298px] h-[15px] bg-[#c1d3fb] border border-[#e6edfd] rounded-[2px] flex items-center justify-center shrink-0">
            <svg width="8" height="7" viewBox="0 0 8 7" shapeRendering="crispEdges"><path d="M.5 0v7M2.500 0v7M4.500 0v7M6.500 0v7" stroke="#8aa0cc" /></svg>
          </span>
          <span className="ml-[2px] w-[15px] h-[15px] bg-[#c1d3fb] border border-[#e6edfd] rounded-[2px] flex items-center justify-center shrink-0">
            <svg width="7" height="9" viewBox="0 0 7 9"><path d="M1.500 1L5 4.500 1.500 8" fill="none" stroke="#4d6185" strokeWidth="2" /></svg>
          </span>
          <Sep className="ml-[3px] !h-[14px]" />
          <svg width="168" height="15" viewBox="0 0 168 15" className="shrink-0 ml-[1px]" shapeRendering="crispEdges">
            <path d="M8 1l3 3H9v7h2l-3 3-3-3h2V4H5z" fill="#000" />
            <text x="22" y="12" fontSize="12" fontWeight="700" fontFamily="Liberation Serif, serif">D</text>
            <path d="M37 1v13" stroke="#c4c1b0" />
            <path d="M49 2l4 4h-3v3h3l-4 4-4-4h3V6h-3z" fill="#000" />
            <path d="M66 2l2 2v3h3l2 0v1l-2 0h-3v3l-2 2-2-2V8h-3l-2 0V7l2 0h3V4z" fill="#000" />
            <circle cx="83" cy="7.500" r="4.500" fill="#fff" stroke="#000" /><path d="M80 7.500h6" stroke="#000" strokeWidth="1.400" />
            <path d="M91 0h15v15H91z" fill="#f6f5ee" />
            <circle cx="100" cy="7.500" r="4.500" fill="#fff" stroke="#000" /><path d="M97 7.500h6M100 4.500v6" stroke="#000" strokeWidth="1.400" />
            <path d="M112 1v13" stroke="#c4c1b0" />
            <path d="M127 2v10l-6-5z" fill="#000" />
            <path d="M138 2v10l6-5z" fill="#000" />
            <path d="M153.500 2.500h8v10h-8zM155 5h5M155 7h5M155 9h5" fill="none" stroke="#000" />
          </svg>
        </div>

        {/* bottom toolbar */}
        <div className="h-[30px] shrink-0 flex items-center pt-[1px] border-t border-t-[#ddd9c6] border-b border-b-[#aca899]">
          <Grip className="ml-[2px]" />
          <div className="ml-[8px] w-[130px] h-[20px] bg-white border border-[#7f9db9] flex items-center pl-[15px] shrink-0">
            <span className="block w-[81px] h-[1px] bg-black" /><span className="ml-auto mr-[1px]"><Chev /></span>
          </div>
          <div className="ml-[6px] w-[100px] h-[20px] bg-white border border-[#7f9db9] flex items-center pl-[11px] shrink-0">
            <span className="block w-[59px] h-[1px] bg-black" /><span className="ml-auto mr-[1px]"><Chev /></span>
          </div>
          <Sep className="ml-[6px]" />
          <Grip className="ml-[1px]" />
          <div className="ml-[10px] shrink-0"><Palette /></div>
          <svg width="8" height="4" viewBox="0 0 8 4" className="ml-[4px] shrink-0"><path d="M0 0h7L3.500 4z" fill="#000" /></svg>
          <Sep className="ml-[12px]" />
          <Grip className="ml-[1px]" />
          <Cell className="ml-[9px]"><svg width="16" height="14" viewBox="0 0 16 14" shapeRendering="crispEdges"><path d="M.5 .5h15v13H.5z" fill="#fff" stroke="#555" /><path d="M1 1h14v3H1z" fill="#000080" /></svg></Cell>
          <Cell><svg width="16" height="14" viewBox="0 0 16 14" shapeRendering="crispEdges"><path d="M.5 .5h15v13H.5z" fill="#fff" stroke="#555" /><path d="M1 1h14v3H1z" fill="#000080" /></svg></Cell>
          <Cell><svg width="13" height="12" viewBox="0 0 13 12"><path d="M.5 3.500h12v8H.5z" fill="#fff" stroke="#000" /><path d="M2 10l3-3 3 2 3-4" fill="none" stroke="#c00000" /><text x="5" y="8" fontSize="8" fontFamily="Liberation Sans, sans-serif">1</text></svg></Cell>
          <Cell><svg width="13" height="12" viewBox="0 0 13 12"><path d="M.5 3.500h12v8H.5z" fill="#fff" stroke="#000" /><path d="M2 10l3-3 3 2 3-4" fill="none" stroke="#c00000" /><text x="5" y="8" fontSize="8" fontFamily="Liberation Sans, sans-serif">2</text></svg></Cell>
          <Cell><Lines /></Cell>
          <Cell><Lines /></Cell>
          <Cell><Lines /></Cell>
          <Sep className="ml-[6px]" />
          <Grip className="ml-[2px]" />
          <div className={"ml-[8px] w-[63px] h-[20px] border border-t-[#808080] border-l-[#808080] border-r-white border-b-white pl-[2px] leading-[18px] shrink-0 text-[#333] " + ui}>74340501</div>
          <Sep className="ml-[4px]" />
          <div className="ml-[2px] w-[80px] h-[21px] bg-white border border-[#7f9db9] flex items-center justify-end pr-[1px] shrink-0"><Chev /></div>
          <Sep className="ml-[3px]" />
          <div className={"ml-[2px] w-[150px] h-[21px] bg-white border border-[#7f9db9] flex items-center pl-[4px] pr-[1px] shrink-0 " + ui}>
            <span>&lt;No Vendor&gt;</span><span className="ml-auto"><Chev /></span>
          </div>
          <Sep className="ml-[3px]" />
          <div className={"ml-[2px] w-[63px] h-[20px] border border-[#c4c1b0] rounded-[3px] bg-[#f2f0e6] text-[#a8a698] flex items-center justify-center shrink-0 " + ui}>Trade</div>
          <Sep className="ml-[8px]" />
        </div>

        {/* status bar */}
        <div className={"h-[17px] shrink-0 flex items-center leading-none pt-[1px] " + ui}>
          <span className="ml-[1px] w-[796px] shrink-0">For Help, press F1</span>
          <span className="w-[58px] h-[15px] border-l border-l-[#c4c1b0] shrink-0" />
          <span className="w-[72px] h-[15px] border-l border-l-[#c4c1b0] shrink-0" />
          <span className="w-[42px] h-[15px] border-l border-l-[#c4c1b0] shrink-0 pl-[5px] leading-[15px]">17:30</span>
          <span className="w-[25px] h-[15px] border-l border-l-[#c4c1b0] shrink-0 text-center"><Dollar /></span>
          <span className="flex-1 h-[15px] border-l border-l-[#c4c1b0]" />
        </div>

        {/* taskbar */}
        <div className="h-[35px] shrink-0 flex relative bg-[linear-gradient(180deg,#1f2f86_0%,#3165c4_3%,#3682e5_6%,#4490e6_10%,#3883e5_12%,#2b71e0_15%,#2663da_18%,#235bd6_20%,#2258d5_23%,#2157d6_38%,#245ddb_54%,#2562df_86%,#245fdc_89%,#2158d4_92%,#1d4ec0_95%,#1941a5_98%)]">
          <div className="w-[110px] h-[35px] shrink-0 rounded-r-[10px] bg-[linear-gradient(180deg,#3c8a3c_0%,#5cb85c_8%,#3f9a3f_20%,#398e39_70%,#2f7a2f_100%)] flex items-center pl-[11px] shadow-[inset_-2px_0_3px_#1f5a1f]">
            <svg width="20" height="20" viewBox="0 0 20 20" className="shrink-0">
              <path d="M2 5l7-2 1 6-7 2z" fill="#e8562a" />
              <path d="M11 2l7-1-1 7-7 1z" fill="#f4c22a" />
              <path d="M2 12l7-2 1 7-8 1z" fill="#4a90e2" />
              <path d="M11 10l6-1-1 8-5 1z" fill="#7fba2a" />
            </svg>
            <span className="ml-[4px] font-['Open_Sans',sans-serif] font-bold italic text-[17px] text-white [text-shadow:1px_1px_1px_#1a4a1a]">Iniciar</span>
          </div>
          <svg width="8" height="26" viewBox="0 0 8 26" className="ml-[7px] mt-[8px] shrink-0" shapeRendering="crispEdges"><path d="M1 0h2v2H1zM3 5h2v2H3zM1 10h2v2H1zM3 15h2v2H3zM1 20h2v2H1z" fill="#123a9e" /></svg>
          <div className="ml-[5px] mt-[9px] flex gap-[2px] shrink-0">
            <span className="w-[142px] h-[26px] rounded-t-[3px] bg-[#3d80ec] border-t border-t-[#6aa0f0]" />
            <span className="w-[142px] h-[26px] rounded-t-[3px] bg-[#3d80ec] border-t border-t-[#6aa0f0]" />
            <span className="w-[142px] h-[26px] rounded-t-[3px] bg-[#1c4eaa] border-t border-t-[#123a80]" />
            <span className="w-[142px] h-[26px] rounded-t-[3px] bg-[#3d80ec] border-t border-t-[#6aa0f0]" />
            <span className="w-[142px] h-[26px] rounded-t-[3px] bg-[#3d80ec] border-t border-t-[#6aa0f0]" />
          </div>
          <span className="absolute left-[138px] top-[13px] w-[713px] h-[20px] bg-white" />
          <svg width="8" height="26" viewBox="0 0 8 26" className="ml-[4px] mt-[8px] shrink-0" shapeRendering="crispEdges"><path d="M1 0h2v2H1zM3 5h2v2H3zM1 10h2v2H1zM3 15h2v2H3zM1 20h2v2H1z" fill="#123a9e" /></svg>
          <span className="ml-[3px] mt-[11px] w-[14px] h-[16px] bg-[#3d74d8] text-white text-[11.5px] leading-[16px] text-center shrink-0">PT</span>
          <div className="ml-[13px] flex-1 bg-[linear-gradient(180deg,#0c59b9_0%,#139ee9_6%,#18b5f2_12%,#139beb_18%,#1290e8_40%,#0d8dea_70%,#0f94ed_88%,#095bc9_100%)] flex items-center pl-[1px]">
            <svg width="20" height="20" viewBox="0 0 20 20" className="-ml-[9px] shrink-0"><circle cx="10" cy="10" r="8.500" fill="#2b7be0" stroke="#fff" /><path d="M12 5l-5 5 5 5" fill="none" stroke="#fff" strokeWidth="2.200" /></svg>
            <svg width="16" height="18" viewBox="0 0 16 18" className="shrink-0"><circle cx="8" cy="5" r="3.500" fill="#7ccf5a" /><path d="M1 16q7-12 14 0z" fill="#6cc050" stroke="#3d8a30" /></svg>
            <svg width="14" height="14" viewBox="0 0 14 14" className="ml-[3px] shrink-0" shapeRendering="crispEdges"><path d="M0 0h7v7H0z" fill="#ffd400" /><path d="M7 0h7v7H7z" fill="#000" /><path d="M0 7h7v7H0z" fill="#007000" /><path d="M7 7h7v7H7z" fill="#e00000" /></svg>
            <svg width="16" height="16" viewBox="0 0 16 16" className="ml-[3px] shrink-0"><circle cx="6" cy="6" r="5" fill="#555" stroke="#ccc" /><circle cx="11" cy="11" r="4" fill="#fff" stroke="#d02020" strokeWidth="1.500" /><path d="M8.500 8.500l5 5" stroke="#d02020" strokeWidth="1.500" /></svg>
            <svg width="16" height="17" viewBox="0 0 16 17" className="ml-[1px] shrink-0" shapeRendering="crispEdges"><path d="M1 0h13v11H1z" fill="#808080" stroke="#ccc" /><path d="M1 13h6v3H1zM9 13h6v3H9z" fill="#222" /></svg>
            <span className="ml-[7px] text-white text-[12.5px]">17:31</span>
          </div>
        </div>
      </div>

      {/* what lies beyond the window */}
      <div className="flex-1 flex flex-col">
        <div className="h-[4px] flex shrink-0">
          <span className="w-[176px] bg-black shrink-0" />
          <div className="flex-1 bg-[#ece9d8]">
            <svg width="465" height="4" viewBox="0 0 465 4" className="block" shapeRendering="crispEdges">
              <path d="M4 0h7v2H4zM242 0h8v4h-8zM250 0h25v3h-25zM275 0h8v4h-8zM335 0h8v4h-8zM343 0h25v3h-25z" fill="#0a5a9a" />
              <path d="M252 0h18v3h-18z" fill="#888" />
              <path d="M343 0h24v3h-24z" fill="#008a8a" />
            </svg>
          </div>
        </div>
        <span className="mt-[594px] w-[2px] h-[72px] bg-black ml-[1px]" />
      </div>
    </div>
  );
}
